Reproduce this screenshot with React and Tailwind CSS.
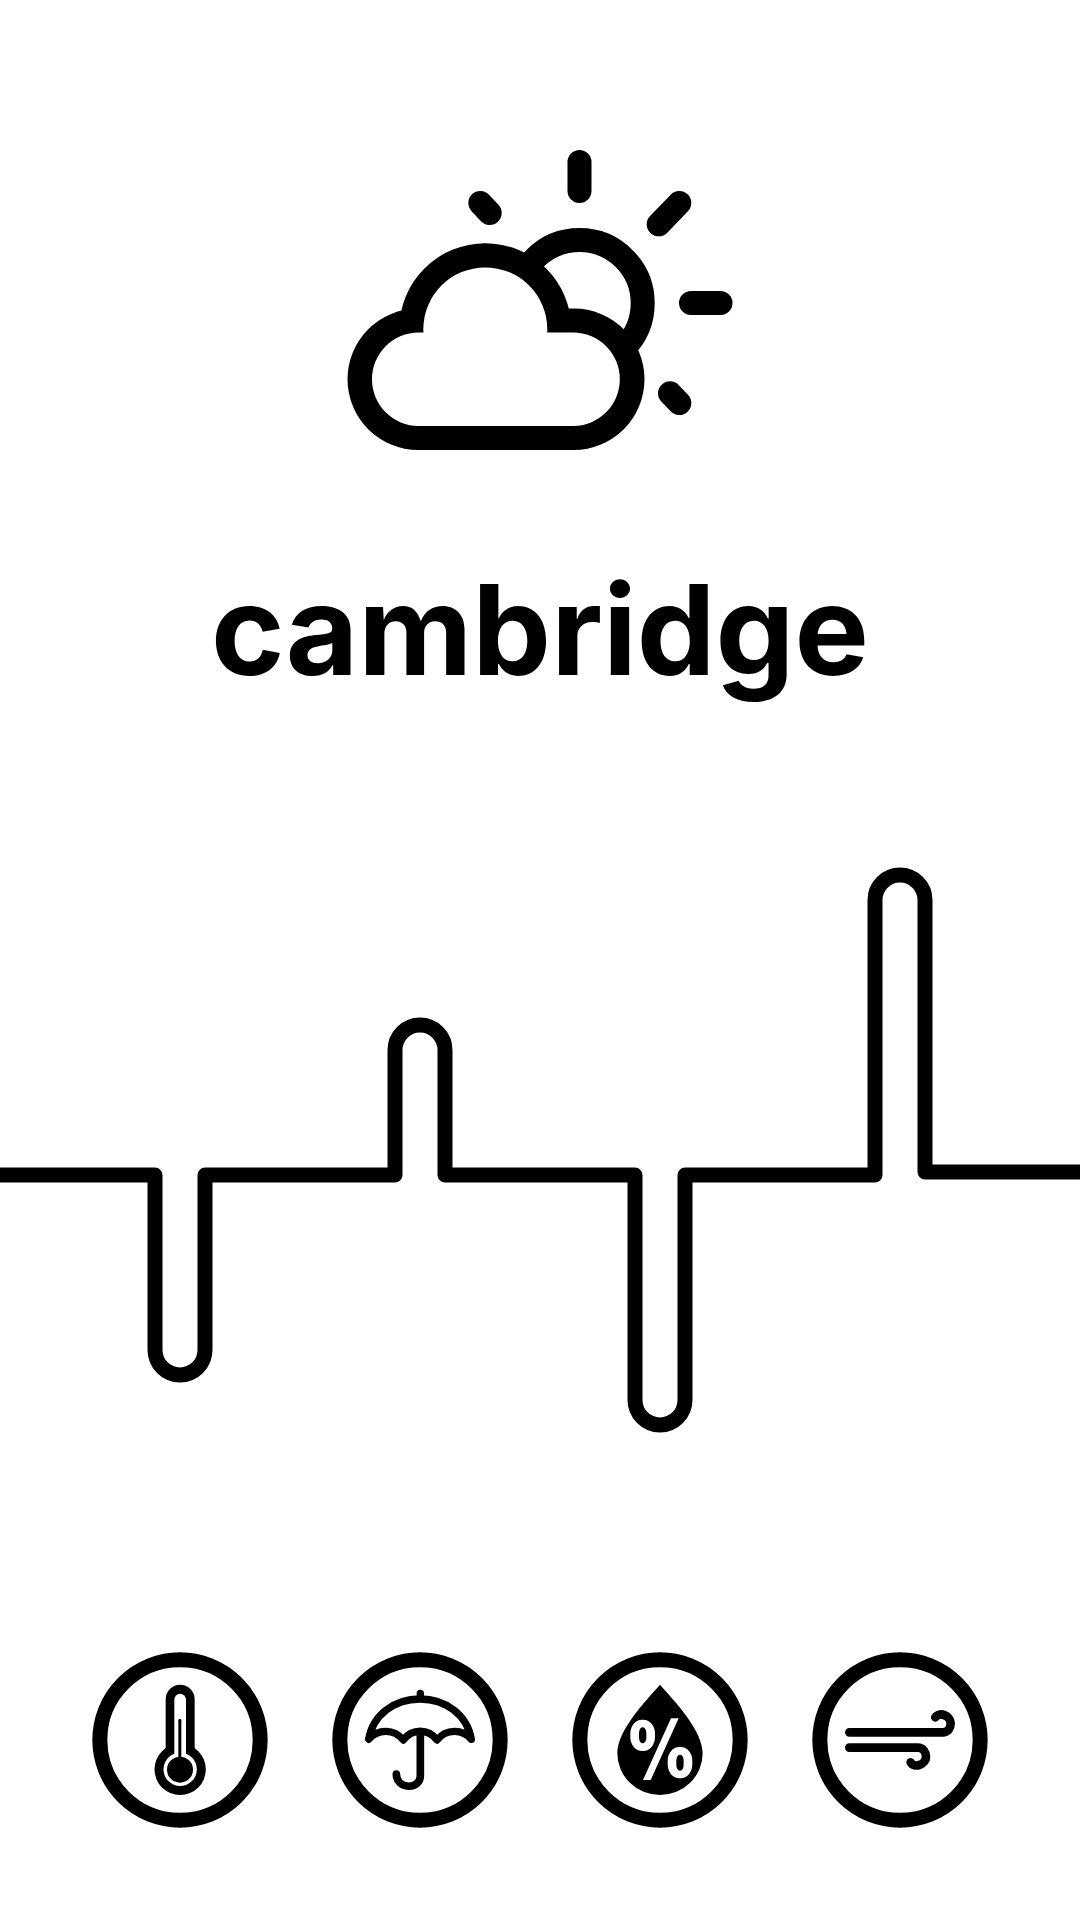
function PartlyCloudy() {
  return (
    <svg viewBox="340 140 400 320" className="w-[400px] max-w-full" role="img" aria-label="Partly cloudy">
      <g fill="none" stroke="black" strokeWidth="24" strokeLinecap="round">
        <circle cx="579.5" cy="303.3" r="63.2" />
        <path d="M579.5 162V191M691 303H720.5M679.3 203L658.7 224.3M480.3 203L489.7 213M670 393.3L679.3 403" />
      </g>
      <g fill="black">
        <rect x="347.5" y="308.5" width="297" height="141.5" rx="70.7" />
        <circle cx="485.3" cy="329.4" r="86.1" />
      </g>
      <g fill="white">
        <rect x="372" y="332.5" width="247.8" height="93.5" rx="46.7" />
        <circle cx="485.3" cy="329.4" r="62" />
      </g>
    </svg>
  );
}

function PulseChart() {
  return (
    <svg viewBox="0 860 1080 580" className="w-full" role="img" aria-label="Weather readings">
      <path
        d="M-10 1175H155V1350A25 25 0 0 0 205 1350V1175H395V1050A25 25 0 0 1 445 1050V1175H635V1400A25 25 0 0 0 685 1400V1175H875V900A25 25 0 0 1 925 900V1172H1090"
        fill="none"
        stroke="black"
        strokeWidth="15"
        strokeLinejoin="round"
      />
    </svg>
  );
}

function Badge({ label, children }) {
  return (
    <svg viewBox="0 0 600 600" className="w-[200px] max-w-full" role="img" aria-label={label}>
      <circle cx="300" cy="300" r="240.5" fill="none" stroke="black" strokeWidth="45" />
      {children}
    </svg>
  );
}

function Thermometer() {
  return (
    <>
      <rect x="257" y="134" width="87" height="260" rx="43.5" />
      <circle cx="300.5" cy="388" r="77" />
      <rect x="283" y="161" width="35" height="215" rx="17.5" fill="white" />
      <circle cx="300.5" cy="388" r="50" fill="white" />
      <circle cx="300" cy="389" r="39" />
      <path d="M299.5 241V370" stroke="black" strokeWidth="9" strokeLinecap="round" />
    </>
  );
}

function Umbrella() {
  return (
    <g fill="none" stroke="black" strokeLinecap="round" strokeLinejoin="round">
      <path strokeWidth="22" d="M301 160V174" />
      <path
        strokeWidth="22"
        d="M146 298C158 226 222 177 300 177S442 226 454 298C427 266 379 266 351 300C325 265 276 265 250 300C222 266 174 266 146 298Z"
      />
      <path strokeWidth="23" d="M301 280V407C301 450 229 450 229 402" />
    </g>
  );
}

function Humidity() {
  return (
    <>
      <path d="M300 134C342 182 428 270 428 340A128 125 0 0 1 172 340C172 270 258 182 300 134Z" />
      <g fill="white">
        <rect x="211" y="239" width="74" height="94" rx="35" ry="42" />
        <rect x="323" y="321" width="74" height="94" rx="35" ry="42" />
        <path d="M333 235H356L272 420H249Z" />
      </g>
      <rect x="237" y="262" width="22" height="48" rx="10" ry="18" />
      <rect x="349" y="344" width="22" height="48" rx="10" ry="18" />
    </>
  );
}

function Wind() {
  return (
    <g fill="none" stroke="black" strokeWidth="26" strokeLinecap="round">
      <path d="M148 277H428C445 277 452 262 452 250C452 226 417 214 406 232" />
      <path d="M148 323H353C370 323 378 338 378 350C378 374 343 386 332 367" />
    </g>
  );
}

export default function App() {
  return (
    <main className="flex min-h-screen flex-col items-center bg-white pt-[140px] pb-20 text-black">
      <PartlyCloudy />
      <h1 className="mt-[90px] font-['Inter',sans-serif] text-[125px] leading-[160px] font-bold">cambridge</h1>
      <div className="mt-[150px] w-full">
        <PulseChart />
      </div>
      <ul className="mt-auto grid w-full grid-cols-4 justify-items-center px-[60px]">
        <li><Badge label="Temperature"><Thermometer /></Badge></li>
        <li><Badge label="Rain"><Umbrella /></Badge></li>
        <li><Badge label="Humidity"><Humidity /></Badge></li>
        <li><Badge label="Wind"><Wind /></Badge></li>
      </ul>
    </main>
  );
}
